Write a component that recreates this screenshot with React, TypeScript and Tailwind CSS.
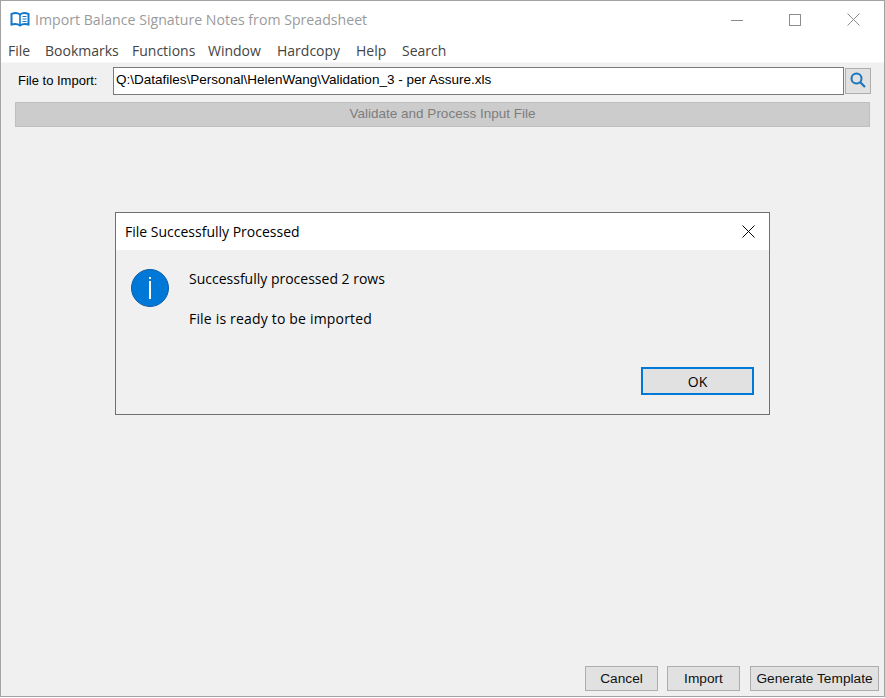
const menus = [
  { label: "File", width: "w-[23px]" },
  { label: "Bookmarks", width: "w-[73px]" },
  { label: "Functions", width: "w-[62px]" },
  { label: "Window", width: "w-[55px]" },
  { label: "Hardcopy", width: "w-[65px]" },
  { label: "Help", width: "w-[32px]" },
  { label: "Search", width: "w-[44px]" },
];

const BookIcon = () => (
  <svg width="20" height="15" viewBox="0 0 20 15" fill="none">
    <path d="M10 2.5 C8 1 4 1 1.5 2 V12.5 C4 12 8 12 10 13.5 C12 12 16 12 18.5 12.5 V2 C16 1 12 1 10 2.5 Z" fill="#fff" stroke="#1479c9" strokeWidth="2" />
    <path d="M10 2.5 V13.5" stroke="#1479c9" strokeWidth="1.6" />
    <path d="M12.5 4.5 H16.5 M12.5 7 H16.5 M12.5 9.5 H16.5" stroke="#1479c9" strokeWidth="1" />
  </svg>
);

const InfoIcon = () => (
  <svg width="38" height="38" viewBox="0 0 38 38">
    <circle cx="19" cy="19" r="18.5" fill="#0078d7" stroke="#0a5ea8" strokeWidth="1" />
    <rect x="18" y="12" width="2" height="18" fill="#fff" />
    <rect x="18" y="8" width="2" height="2" fill="#fff" />
  </svg>
);

const SearchGlyph = () => (
  <svg width="18" height="18" viewBox="0 0 18 18" fill="none">
    <circle cx="7.5" cy="6.5" r="5" stroke="#1b75bc" strokeWidth="2" />
    <path d="M11.2 10.2 L16 15" stroke="#1b75bc" strokeWidth="2.2" />
  </svg>
);

const WindowControls = () => (
  <div className="ml-auto flex items-center">
    <div className="flex w-[58px] justify-center">
      <svg width="12" height="12" viewBox="0 0 12 12"><path d="M0 6.5 H12" stroke="#8c8c8c" /></svg>
    </div>
    <div className="flex w-[58px] justify-center">
      <svg width="12" height="12" viewBox="0 0 12 12"><rect x="0.5" y="0.5" width="11" height="11" fill="none" stroke="#8c8c8c" /></svg>
    </div>
    <div className="mr-[2px] flex w-[58px] justify-center">
      <svg width="13" height="13" viewBox="0 0 13 13"><path d="M0.5 0.5 L12.5 12.5 M12.5 0.5 L0.5 12.5" stroke="#8c8c8c" /></svg>
    </div>
  </div>
);

function FooterButton({ label, width }: { label: string; width: string }) {
  return (
    <button className={`h-[25px] ${width} border border-[#adadad] bg-[#e1e1e1] pt-[1px] text-[13.7px] text-[#111] font-['Liberation_Sans',sans-serif]`}>
      {label}
    </button>
  );
}

export default function App() {
  return (
    <div className="relative h-[698px] w-[885px] overflow-hidden bg-white font-['Open_Sans',sans-serif]">
      <div className="flex h-[697px] flex-col border border-[#a3a3a3]">
        {/* title bar */}
        <div className="flex h-[37px] shrink-0 items-center bg-white pl-[9px]">
          <BookIcon />
          <span className="ml-[5px] text-[14.15px] text-[#9b9b9b]">Import Balance Signature Notes from Spreadsheet</span>
          <WindowControls />
        </div>

        {/* menu */}
        <div className="flex h-[24px] shrink-0 items-center gap-[14px] bg-white pl-[7px] text-[14px] text-[#444]">
          {menus.map((m) => (
            <span key={m.label} className={`${m.width} whitespace-nowrap`}>{m.label}</span>
          ))}
        </div>

        {/* body */}
        <div className="flex flex-1 flex-col border-t border-[#f7f7f7] bg-[#f0f0f0]">
          <div className="mt-[3px] flex h-[29px] items-center pl-[17px]">
            <span className="w-[95px] text-[13px] text-black font-['Liberation_Sans',sans-serif]">File to Import:</span>
            <div className="flex h-[28px] w-[731px] items-center border border-[#7a7a7a] bg-white pl-[2px] text-[13.5px] text-black font-['Liberation_Sans',sans-serif]">
              Q:\Datafiles\Personal\HelenWang\Validation_3 - per Assure.xls
            </div>
            <div className="ml-[1px] flex h-[26px] w-[26px] items-center justify-center border border-[#adadad] bg-[#e1e1e1]">
              <SearchGlyph />
            </div>
          </div>
          <div className="mx-[14px] mt-[7px] flex h-[25px] w-[855px] items-center justify-center border border-[#bfbfbf] bg-[#cccccc] text-[13.5px] text-[#7d7d7d] font-['Liberation_Sans',sans-serif]">
            Validate and Process Input File
          </div>

          <div className="mt-auto mb-[5px] flex justify-end pr-[5px]">
            <FooterButton label="Cancel" width="w-[73px]" />
            <div className="w-[9px]" />
            <FooterButton label="Import" width="w-[73px]" />
            <div className="w-[10px]" />
            <FooterButton label="Generate Template" width="w-[129px]" />
          </div>
        </div>
      </div>

      {/* message box */}
      <div className="absolute left-[115px] top-[212px] flex h-[203px] w-[655px] flex-col border border-[#6f6f6f] bg-[#f0f0f0]">
        <div className="flex h-[37px] shrink-0 items-center justify-between bg-white pl-[9px] pr-[14px] text-[14px] text-black">
          <span>File Successfully Processed</span>
          <svg width="13" height="13" viewBox="0 0 13 13"><path d="M0.5 0.5 L12.5 12.5 M12.5 0.5 L0.5 12.5" stroke="#000" /></svg>
        </div>
        <div className="flex pl-[15px] pt-[19px]">
          <InfoIcon />
          <div className="ml-[20px] text-[14px] leading-[20px] text-black">
            <p>Successfully processed 2 rows</p>
            <p className="mt-[20px] tracking-[0.18px]">File is ready to be imported</p>
          </div>
        </div>
        <div className="mt-auto mb-[19px] flex justify-end pr-[15px]">
          <button className="h-[28px] w-[113px] border-2 border-[#0078d7] bg-[#e1e1e1] text-[14px] text-black">OK</button>
        </div>
      </div>
    </div>
  );
}
